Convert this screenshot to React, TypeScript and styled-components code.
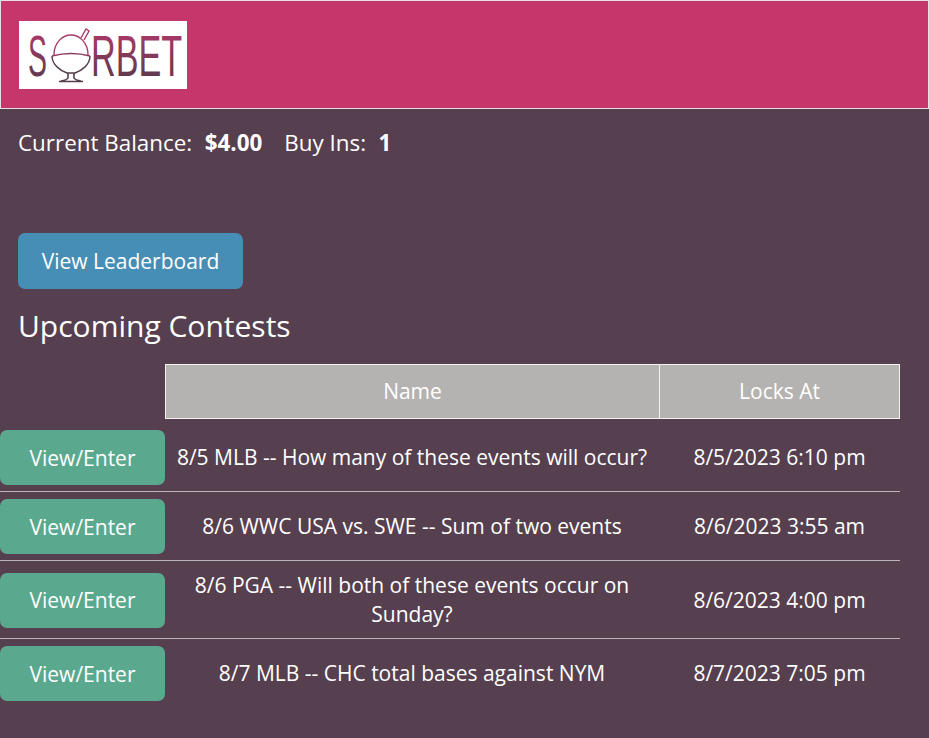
import React from "react";
import styled, { createGlobalStyle } from "styled-components";

const Global = createGlobalStyle`
  html, body { margin: 0; padding: 0; background: #563f4f; }
  body { font-family: "Open Sans", "Noto Sans", sans-serif; color: #fff; }
  * { box-sizing: border-box; }
`;

const Page = styled.div`
  min-height: 738px;
  background: #563f4f;
  overflow: hidden;
`;

const Header = styled.header`
  height: 109px;
  background: #c5376a;
  border: 1px solid #e6dfe3;
  padding: 20px 18px;
`;

const LogoBox = styled.div`
  width: 168px;
  height: 68px;
  background: #fff;
`;

const Balance = styled.div`
  display: flex;
  align-items: center;
  height: 30px;
  margin: 19px 0 0 18px;
  font-size: 22.4px;
  line-height: 30px;
  white-space: pre;
`;

const Label = styled.span<{ $gap?: number }>`
  margin-left: ${(p) => p.$gap ?? 0}px;
  margin-right: 12.5px;
`;

const Strong = styled.strong`
  font-weight: 700;
`;

const LeaderButton = styled.button`
  display: block;
  width: 225px;
  height: 56px;
  margin: 75px 0 0 18px;
  border: none;
  border-radius: 7px;
  background: #468eb6;
  color: #fff;
  font: 400 21px/30px "Open Sans", sans-serif;
`;

const Title = styled.h2`
  margin: 17px 0 18px 18px;
  height: 40px;
  font-size: 30px;
  font-weight: 400;
  line-height: 40px;
`;

const Table = styled.table`
  width: 900px;
  table-layout: fixed;
  border-collapse: separate;
  border-spacing: 0;
  font-size: 21px;
  line-height: 29px;
`;

const Head = styled.th<{ $last?: boolean }>`
  height: 55px;
  padding: 0;
  background: #b5b3b1;
  border: 1px solid #f2f0f0;
  border-right-width: ${(p) => (p.$last ? 1 : 0)}px;
  font-weight: 400;
  text-align: center;
`;

const BlankHead = styled.th`
  padding: 0;
`;

const Row = styled.tr`
  & > td { border-bottom: 1px solid #bfb3bb; }
  &:last-child > td { border-bottom: none; }
`;

const ActionCell = styled.td<{ $first?: boolean }>`
  padding: ${(p) => (p.$first ? "11px 0 6px" : "7px 0 6px")};
`;

const Cell = styled.td<{ $first?: boolean }>`
  padding: ${(p) => (p.$first ? "11px 8px 6px" : "10px 8px 9px")};
  text-align: center;
`;

const EnterButton = styled.button`
  display: block;
  width: 165px;
  height: 55px;
  border: none;
  border-radius: 7px;
  background: #5aa98f;
  color: #fff;
  font: 400 21px/30px "Open Sans", sans-serif;
`;

const Logo = () => (
  <svg width="168" height="68" viewBox="0 0 168 68" role="img" aria-label="Sorbet logo">
    <defs>
      <linearGradient id="lg" x1="0" y1="0" x2="0" y2="1">
        <stop offset="0" stopColor="#b8386b" />
        <stop offset="1" stopColor="#4f3a48" />
      </linearGradient>
    </defs>
    <text transform="translate(9 55) scale(0.49 1)" fontFamily="Liberation Sans, sans-serif" fontSize="58" fill="url(#lg)">S</text>
    <text transform="translate(72 55) scale(0.6 1)" fontFamily="Liberation Sans, sans-serif" fontSize="57" fill="url(#lg)">RBET</text>
    <g fill="none" stroke="#553e4e" strokeWidth="1.4">
      <path d="M35 34 C35 21 44 14 52 14 C60 14 69 21 69 34" stroke="#a83b67" />
      <path d="M62 17 L67 8 L70 10 L65 19" stroke="#a83b67" fill="#fff" />
      <path d="M33 35 Q52 30 71 35" stroke="#8f3a60" />
      <path d="M33 35 C33 44 42 50 48 52 H56 C62 50 71 44 71 35" />
      <path d="M49 52 V57 Q48 59 42 60 M55 52 V57 Q56 59 62 60 M40 60.5 H64" strokeWidth="1.6" />
    </g>
  </svg>
);

const rows: { name: string; at: string }[] = [
  { name: "8/5 MLB -- How many of these events will occur?", at: "8/5/2023 6:10 pm" },
  { name: "8/6 WWC USA vs. SWE -- Sum of two events", at: "8/6/2023 3:55 am" },
  { name: "8/6 PGA -- Will both of these events occur on Sunday?", at: "8/6/2023 4:00 pm" },
  { name: "8/7 MLB -- CHC total bases against NYM", at: "8/7/2023 7:05 pm" },
];

export default function App() {
  return (
    <Page>
      <Global />
      <Header>
        <LogoBox><Logo /></LogoBox>
      </Header>
      <Balance>
        <Label>Current Balance:</Label>
        <Strong>$4.00</Strong>
        <Label $gap={22}>Buy Ins:</Label>
        <Strong>1</Strong>
      </Balance>
      <LeaderButton>View Leaderboard</LeaderButton>
      <Title>Upcoming Contests</Title>
      <Table>
        <colgroup>
          <col style={{ width: 165 }} />
          <col style={{ width: 494 }} />
          <col style={{ width: 241 }} />
        </colgroup>
        <thead>
          <tr>
            <BlankHead />
            <Head>Name</Head>
            <Head $last>Locks At</Head>
          </tr>
        </thead>
        <tbody>
          {rows.map((r, i) => (
            <Row key={r.name}>
              <ActionCell $first={i === 0}><EnterButton>View/Enter</EnterButton></ActionCell>
              <Cell $first={i === 0}>{r.name}</Cell>
              <Cell $first={i === 0}>{r.at}</Cell>
            </Row>
          ))}
        </tbody>
      </Table>
    </Page>
  );
}
